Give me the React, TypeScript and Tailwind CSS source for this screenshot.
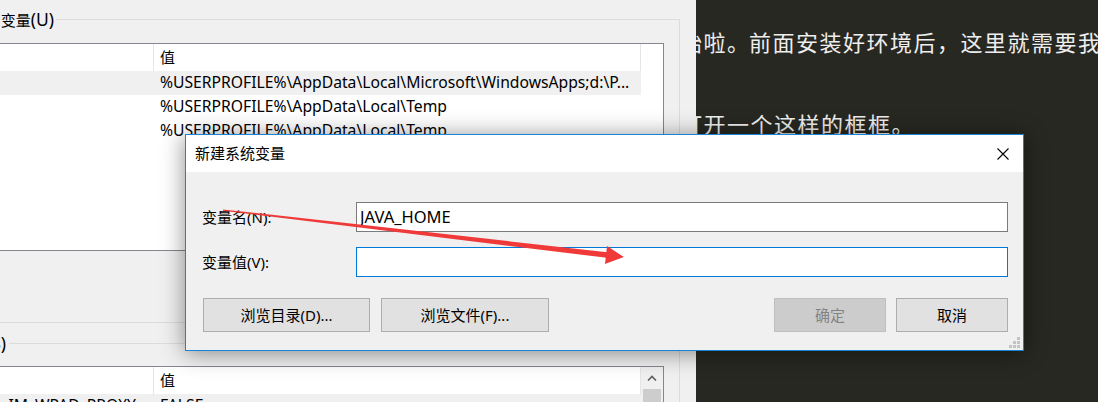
import React from "react";

type Row = { name?: string; value: string; selected?: boolean };

function ListBox({ rows, scrollbar, heightClass }: { rows: Row[]; scrollbar?: boolean; heightClass: string }) {
  return (
    <div className={`flex overflow-hidden border border-[#828790] bg-white ${heightClass}`}>
      <div className="flex min-w-0 flex-1 flex-col">
        <div className="flex h-[27px] shrink-0">
          <div className="flex-1 border-r border-[#e5e5e5]" />
          <div className="flex w-[487px] items-center border-r border-[#e5e5e5] pl-[6px]">值</div>
        </div>
        {rows.map((r, i) => (
          <div key={i} className={`flex h-[24px] shrink-0 items-center text-[15.7px] ${r.selected ? "bg-[#f0f0f0]" : ""}`}>
            <div className="flex min-w-0 flex-1 justify-end overflow-hidden whitespace-nowrap pr-[18px]">{r.name ?? ""}</div>
            <div className="w-[487px] overflow-hidden whitespace-nowrap pl-[6px]">{r.value}</div>
          </div>
        ))}
      </div>
      {scrollbar ? (
        <div className="flex w-[22px] shrink-0 flex-col bg-[#f0f0f0]">
          <div className="flex h-[22px] shrink-0 items-center justify-center">
            <svg width="10" height="6" viewBox="0 0 10 6">
              <path d="M1 5.5 L5 1.5 L9 5.5" fill="none" stroke="#606060" strokeWidth="1.6" />
            </svg>
          </div>
          <div className="mx-[2px] flex-1 bg-[#cdcdcd]" />
        </div>
      ) : (
        <div className="w-[22px] shrink-0" />
      )}
    </div>
  );
}

function BackWindow() {
  return (
    <div className="h-full w-[696px] shrink-0 overflow-hidden bg-[#f0f0f0] text-[15px] text-black">
      <div className="ml-[-100px] w-[780px] pt-[9px]">
        <fieldset className="border border-[#dcdcdc] pb-[71px] pl-[55px] pr-[15px]">
          <legend className="w-[100px] leading-[20px]">
            <div className="whitespace-nowrap pr-[2px] text-right">
              用户变量<span className="text-[17.5px]">(U)</span>
            </div>
          </legend>
          <div className="mt-[13px]">
            <ListBox
              heightClass="h-[208px]"
              rows={[
                { value: "%USERPROFILE%\\AppData\\Local\\Microsoft\\WindowsApps;d:\\P...", selected: true },
                { value: "%USERPROFILE%\\AppData\\Local\\Temp" },
                { value: "%USERPROFILE%\\AppData\\Local\\Temp" },
                { value: "" },
              ]}
            />
          </div>
        </fieldset>
        <fieldset className="mt-[10px] border border-[#dcdcdc] pb-[20px] pl-[8px] pr-[15px]">
          <legend className="w-[100px] leading-[20px]">
            <div className="whitespace-nowrap pr-[3px] text-right">
              系统变量<span className="text-[17.5px]">(S)</span>
            </div>
          </legend>
          <div className="mt-[12px]">
            <ListBox
              heightClass="h-[120px]"
              scrollbar
              rows={[{ name: "IM_WPAD_PROXY", value: "FALSE", selected: true }, { value: "" }]}
            />
          </div>
        </fieldset>
      </div>
    </div>
  );
}

function BlogText() {
  return (
    <div className="min-w-0 flex-1 overflow-hidden whitespace-nowrap font-['Noto_Sans_CJK_SC',sans-serif] text-[22px] tracking-[1.5px] text-[#eeeeee]">
      <p className="ml-[-16px] mt-[25px] leading-[33px]">
        始啦<span className="tracking-[-9px]">。</span>
        <span className="ml-[9px]">前面安装好环境后，这里就需要我们</span>
      </p>
      <p className="ml-[-16px] mt-[49px] leading-[33px]">打开一个这样的框框。</p>
    </div>
  );
}

function Btn({ label, w, disabled }: { label: string; w: string; disabled?: boolean }) {
  return (
    <div
      className={`flex h-[34px] items-center justify-center border ${w} ${
        disabled ? "border-[#bfbfbf] bg-[#cccccc] text-[#838383]" : "border-[#adadad] bg-[#e1e1e1] text-black"
      }`}
    >
      {label}
    </div>
  );
}

function Dialog() {
  return (
    <div className="absolute left-[185px] top-[134px] flex h-[217px] w-[839px] flex-col border border-[#1883d7] bg-[#f0f0f0] text-[15px] text-black shadow-[0_2px_22px_rgba(0,0,0,0.45)]">
      <div className="flex h-[37px] shrink-0 items-center justify-between bg-white pl-[9px] pr-[14px]">
        <span className="font-['Noto_Sans_CJK_SC',sans-serif]">新建系统变量</span>
        <svg width="12" height="12" viewBox="0 0 12 12">
          <path d="M0.5 0.5 L11.5 11.5 M11.5 0.5 L0.5 11.5" stroke="#000" strokeWidth="1.1" />
        </svg>
      </div>
      <div className="flex flex-1 flex-col pl-[16px] pr-[15px] pt-[30px]">
        <div className="flex h-[30px] items-center">
          <div className="w-[154px] shrink-0">变量名(N):</div>
          <div className="flex h-full flex-1 items-center border border-[#7a7a7a] bg-white pl-[3px] text-[16.5px]">JAVA_HOME</div>
        </div>
        <div className="mt-[15px] flex h-[30px] items-center">
          <div className="w-[154px] shrink-0">变量值(V):</div>
          <div className="h-full flex-1 border border-[#0078d7] bg-white" />
        </div>
        <div className="mt-[21px] flex items-center pl-[1px]">
          <Btn label="浏览目录(D)..." w="w-[167px]" />
          <div className="ml-[11px]">
            <Btn label="浏览文件(F)..." w="w-[168px]" />
          </div>
          <div className="flex-1" />
          <Btn label="确定" w="w-[112px]" disabled />
          <div className="ml-[10px]">
            <Btn label="取消" w="w-[112px]" />
          </div>
        </div>
      </div>
      <svg className="absolute bottom-[2px] right-[3px]" width="11" height="11" viewBox="0 0 11 11">
        <rect x="8" y="0" width="3" height="3" fill="#c3c3c3" />
        <rect x="4" y="4" width="3" height="3" fill="#c3c3c3" />
        <rect x="8" y="4" width="3" height="3" fill="#c3c3c3" />
        <rect x="0" y="8" width="3" height="3" fill="#c3c3c3" />
        <rect x="4" y="8" width="3" height="3" fill="#c3c3c3" />
        <rect x="8" y="8" width="3" height="3" fill="#c3c3c3" />
      </svg>
    </div>
  );
}

function Arrow() {
  return (
    <svg className="pointer-events-none absolute left-0 top-0" width="1098" height="402" viewBox="0 0 1098 402">
      <polygon points="223,209.4 607.3,252.2 606.7,257.8 223,210.8" fill="#f03a3a" />
      <polygon points="607.05,246.06 623.9,257.1 604.95,263.94" fill="#f03a3a" />
    </svg>
  );
}

export default function App() {
  return (
    <div className="relative flex h-[402px] w-[1098px] overflow-hidden bg-[#282822] font-['Noto_Sans','Noto_Sans_CJK_SC',sans-serif]">
      <BackWindow />
      <BlogText />
      <Dialog />
      <Arrow />
    </div>
  );
}
